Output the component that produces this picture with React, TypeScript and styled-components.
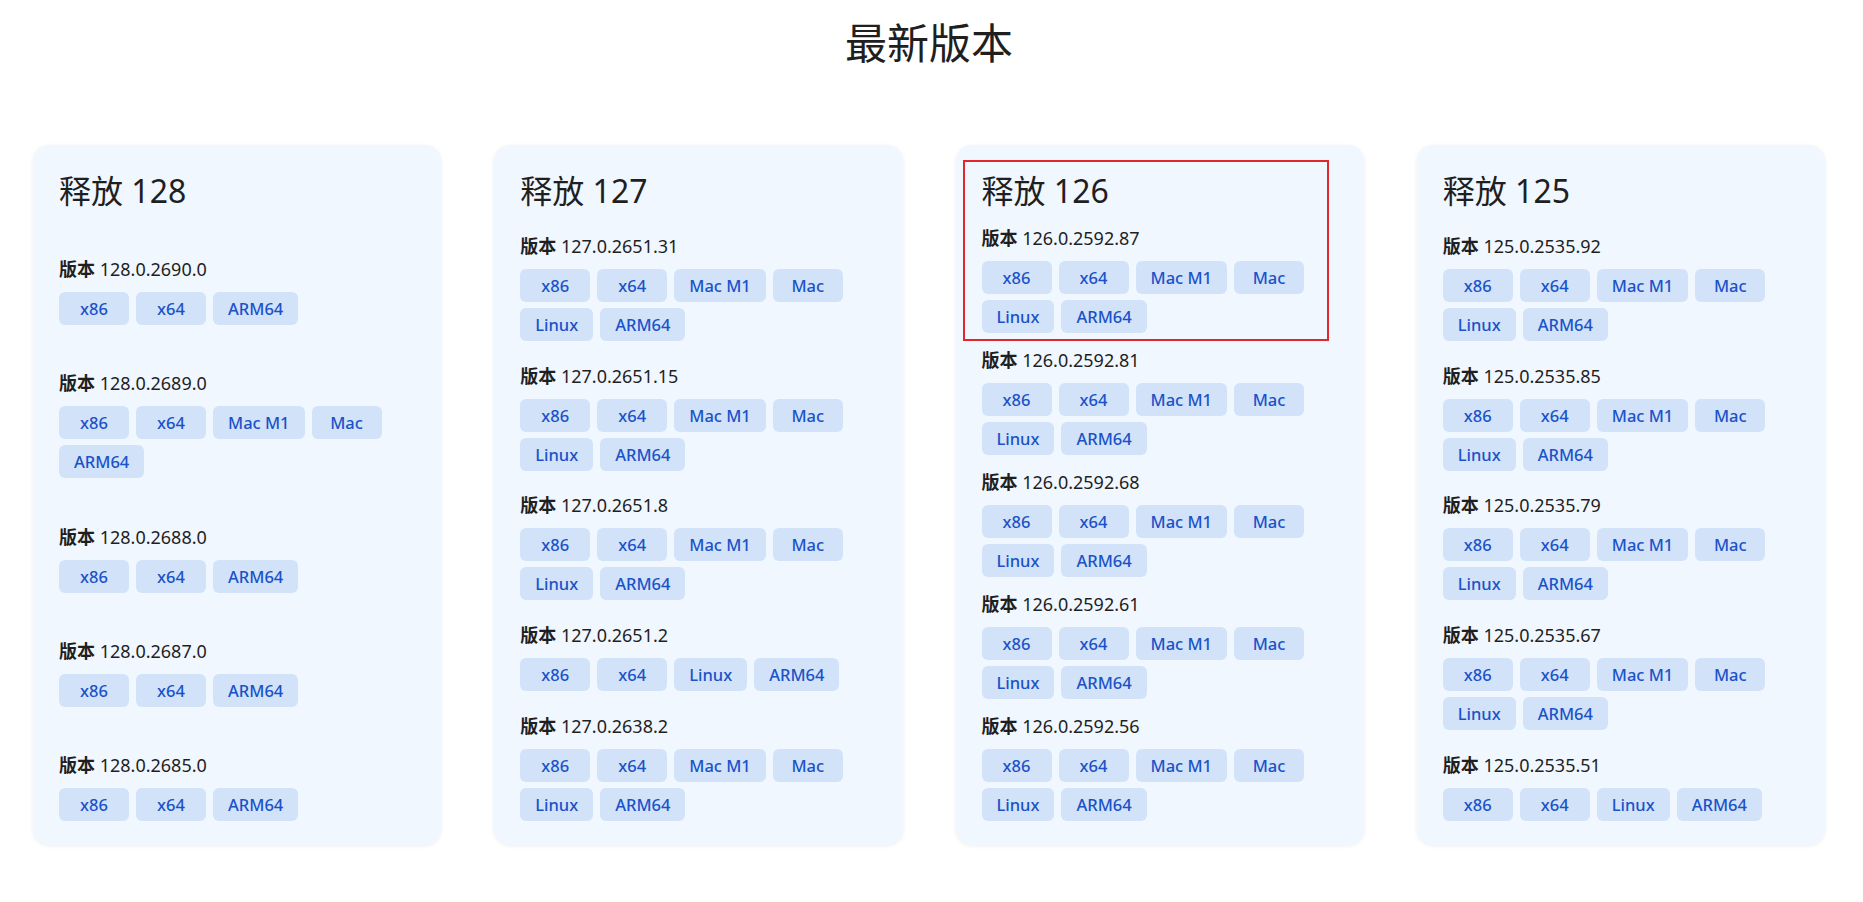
import React from "react";
import styled, { createGlobalStyle } from "styled-components";

const GlobalStyle = createGlobalStyle`
  html, body {
    margin: 0;
    padding: 0;
    background: #ffffff;
  }
  body {
    font-family: "Noto Sans", "Noto Sans CJK SC", sans-serif;
    color: #1f1f1f;
  }
`;

const Page = styled.div`
  display: flex;
  flex-direction: column;
  padding: 18px 38px 40px 33px;
`;

const Heading = styled.h1`
  margin: 0;
  font-size: 42px;
  line-height: 50px;
  font-weight: 400;
  text-align: center;
  color: #1f1f1f;
`;

const Grid = styled.div`
  display: grid;
  grid-template-columns: repeat(4, 1fr);
  column-gap: 53px;
  margin-top: 77px;
`;

const Card = styled.section`
  position: relative;
  display: flex;
  flex-direction: column;
  background: #f0f7ff;
  border-radius: 16px;
  box-shadow: 0 1px 4px rgba(0, 0, 0, 0.07);
  padding: 26px 26px 24px 26px;
`;

const CardTitle = styled.h2`
  margin: 0 0 14px 0;
  font-size: 32px;
  line-height: 40px;
  font-weight: 400;
  color: #1f1f1f;
`;

const VersionList = styled.div`
  flex: 1;
  display: flex;
  flex-direction: column;
  gap: 14px;
`;

const VersionBlock = styled.div`
  flex: 1 1 auto;
  display: flex;
  flex-direction: column;
  justify-content: flex-end;
`;

const VersionLabel = styled.div`
  font-size: 18px;
  line-height: 26px;
  margin-bottom: 10px;
  color: #1f1f1f;
  b {
    font-weight: 700;
  }
`;

const ButtonRow = styled.div`
  display: flex;
  flex-wrap: wrap;
  column-gap: 7px;
  row-gap: 6px;
`;

const PlatformButton = styled.a`
  display: inline-flex;
  align-items: center;
  justify-content: center;
  box-sizing: border-box;
  height: 33px;
  min-width: 70px;
  padding: 0 15px;
  border-radius: 6px;
  background: #d2e2f8;
  color: #1a52c9;
  font-size: 16.5px;
  font-weight: 500;
  text-decoration: none;
  cursor: pointer;
`;

const Highlight = styled.div`
  position: absolute;
  left: 7px;
  top: 15px;
  width: 366px;
  height: 181px;
  box-sizing: border-box;
  border: 2px solid #e3262c;
  pointer-events: none;
`;

type Version = { v: string; p: string[] };
type Release = { n: number; versions: Version[]; highlight?: boolean };

const FULL = ["x86", "x64", "Mac M1", "Mac", "Linux", "ARM64"];
const BASIC = ["x86", "x64", "ARM64"];
const LINUX = ["x86", "x64", "Linux", "ARM64"];

const releases: Release[] = [
  {
    n: 128,
    versions: [
      { v: "128.0.2690.0", p: BASIC },
      { v: "128.0.2689.0", p: ["x86", "x64", "Mac M1", "Mac", "ARM64"] },
      { v: "128.0.2688.0", p: BASIC },
      { v: "128.0.2687.0", p: BASIC },
      { v: "128.0.2685.0", p: BASIC },
    ],
  },
  {
    n: 127,
    versions: [
      { v: "127.0.2651.31", p: FULL },
      { v: "127.0.2651.15", p: FULL },
      { v: "127.0.2651.8", p: FULL },
      { v: "127.0.2651.2", p: LINUX },
      { v: "127.0.2638.2", p: FULL },
    ],
  },
  {
    n: 126,
    highlight: true,
    versions: [
      { v: "126.0.2592.87", p: FULL },
      { v: "126.0.2592.81", p: FULL },
      { v: "126.0.2592.68", p: FULL },
      { v: "126.0.2592.61", p: FULL },
      { v: "126.0.2592.56", p: FULL },
    ],
  },
  {
    n: 125,
    versions: [
      { v: "125.0.2535.92", p: FULL },
      { v: "125.0.2535.85", p: FULL },
      { v: "125.0.2535.79", p: FULL },
      { v: "125.0.2535.67", p: FULL },
      { v: "125.0.2535.51", p: LINUX },
    ],
  },
];

export default function App() {
  return (
    <>
      <GlobalStyle />
      <Page>
        <Heading>最新版本</Heading>
        <Grid>
          {releases.map((r) => (
            <Card key={r.n}>
              {r.highlight && <Highlight />}
              <CardTitle>释放 {r.n}</CardTitle>
              <VersionList>
                {r.versions.map((ver) => (
                  <VersionBlock key={ver.v}>
                    <VersionLabel>
                      <b>版本</b> {ver.v}
                    </VersionLabel>
                    <ButtonRow>
                      {ver.p.map((p) => (
                        <PlatformButton key={p}>{p}</PlatformButton>
                      ))}
                    </ButtonRow>
                  </VersionBlock>
                ))}
              </VersionList>
            </Card>
          ))}
        </Grid>
      </Page>
    </>
  );
}
